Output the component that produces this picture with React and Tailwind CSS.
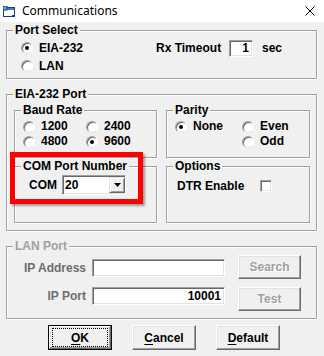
import React from "react";

const sunken =
  "bg-white border border-t-[#a0a0a0] border-l-[#a0a0a0] border-r-white border-b-white shadow-[inset_1px_1px_0_#696969,inset_-1px_-1px_0_#e3e3e3]";

function Group({ label, className = "", children, disabled }) {
  return (
    <div
      className={`relative border border-[#a0a0a0] shadow-[1px_1px_0_#fff,inset_1px_1px_0_#fff] ${className}`}
    >
      <span
        className={`absolute left-[6px] -top-[8px] px-[2px] bg-[#f0f0f0] leading-[14px] whitespace-nowrap ${
          disabled ? "text-[#a0a0a0]" : "text-black"
        }`}
      >
        {label}
      </span>
      {children}
    </div>
  );
}

function Radio({ checked, label, className = "" }) {
  return (
    <div className={`flex items-center h-[15px] ${className}`}>
      <span className="relative w-[12px] h-[12px] rounded-full border border-t-[#a0a0a0] border-l-[#a0a0a0] border-r-white border-b-[#e3e3e3] bg-white shadow-[inset_1px_1px_0_#696969] flex items-center justify-center shrink-0">
        {checked && <span className="w-[4px] h-[4px] rounded-full bg-black" />}
      </span>
      <span className="ml-[6px] leading-[15px] whitespace-nowrap">{label}</span>
    </div>
  );
}

function Btn({ children, disabled, isDefault, className = "" }) {
  const inner = (
    <div className="h-full w-full flex items-center justify-center border border-t-white border-l-white border-r-[#696969] border-b-[#696969] shadow-[inset_-1px_-1px_0_#a0a0a0,inset_1px_1px_0_#e3e3e3] bg-[#f0f0f0]">
      <span
        className={
          disabled ? "text-[#a0a0a0] [text-shadow:1px_1px_0_#fff]" : "text-black"
        }
      >
        {children}
      </span>
    </div>
  );
  if (isDefault) {
    return (
      <div className={`border border-black ${className}`}>
        <div className="relative h-full w-full">
          {inner}
          <div className="absolute left-[3px] top-[2px] right-[3px] bottom-[2px] border border-dotted border-black" />
        </div>
      </div>
    );
  }
  return <div className={className}>{inner}</div>;
}

export default function App() {
  return (
    <div className="relative w-[324px] h-[356px] overflow-hidden bg-[#f0f0f0] font-['Liberation_Sans',Arial,sans-serif] text-[12px] font-bold text-black">
      {/* Title bar */}
      <div className="h-[22px] bg-white flex items-center font-normal font-['Noto_Sans',sans-serif]">
        <svg width="13" height="12" viewBox="0 0 13 12" className="ml-[3px] mt-[1px]">
          <rect x="0.5" y="1.5" width="11" height="9" fill="#ffffff" stroke="#1b3f7a" />
          <rect x="1" y="2" width="10" height="2" fill="#3a7bd5" />
          <rect x="0" y="0" width="4" height="4" fill="#4fb0e8" stroke="#1b3f7a" strokeWidth="1" />
          <rect x="9" y="9" width="2" height="2" fill="#1b3f7a" />
        </svg>
        <span className="ml-[6px] text-[12px] leading-[14px]">Communications</span>
        <svg width="10" height="10" viewBox="0 0 10 10" className="ml-auto mr-[9px]">
          <path d="M0.5 0.5 L9.5 9.5 M9.5 0.5 L0.5 9.5" stroke="#000" strokeWidth="1" />
        </svg>
      </div>

      <div className="px-[6px] flex flex-col">
        {/* Port Select */}
        <Group label="Port Select" className="mt-[8px] w-[311px] h-[49px]">
          <div className="flex pt-[8px]">
            <div className="w-[149px] pl-[14px] flex flex-col">
              <div className="h-[18px] flex items-center">
                <Radio checked label="EIA-232" />
              </div>
              <div className="h-[18px] flex items-center">
                <Radio label="LAN" />
              </div>
            </div>
            <div className="h-[18px] flex items-center">
              <span className="w-[73px] whitespace-nowrap">Rx Timeout</span>
              <div className={`w-[24px] h-[17px] ${sunken} flex items-center justify-end pr-[3px]`}>
                1
              </div>
              <span className="ml-[9px]">sec</span>
            </div>
          </div>
        </Group>

        {/* EIA-232 Port */}
        <Group label="EIA-232 Port" className="mt-[15px] w-[311px] h-[137px]">
          <div className="flex mt-[15px] ml-[7px] gap-[9px]">
            <Group label="Baud Rate" className="w-[143px] h-[48px]">
              <div className="pt-[8px] pl-[8px] grid grid-cols-[63px_63px]">
                <Radio label="1200" />
                <Radio label="2400" />
                <Radio label="4800" />
                <Radio checked label="9600" />
              </div>
            </Group>
            <Group label="Parity" className="w-[144px] h-[48px]">
              <div className="pt-[8px] pl-[8px] grid grid-cols-[67px_67px]">
                <Radio checked label="None" />
                <Radio label="Even" />
                <span />
                <Radio label="Odd" />
              </div>
            </Group>
          </div>
          <div className="flex mt-[8px] ml-[7px] gap-[9px]">
            <Group label="COM Port Number" className="w-[143px] h-[57px]">
              <div className="pt-[8px] pl-[14px] flex items-center">
                <span className="w-[33px]">COM</span>
                <div className={`w-[64px] h-[20px] ${sunken} flex items-center`}>
                  <span className="ml-[2px] flex-1">20</span>
                  <div className="w-[16px] h-[16px] mr-[0px] flex items-center justify-center border border-t-[#e3e3e3] border-l-[#e3e3e3] border-r-[#696969] border-b-[#696969] shadow-[inset_1px_1px_0_#fff,inset_-1px_-1px_0_#a0a0a0] bg-[#f0f0f0]">
                    <svg width="7" height="4" viewBox="0 0 7 4">
                      <path d="M0 0 H7 L3.5 4 Z" fill="#000" />
                    </svg>
                  </div>
                </div>
              </div>
            </Group>
            <Group label="Options" className="w-[144px] h-[57px]">
              <div className="pt-[10px] pl-[10px] h-[28px] flex items-center">
                <span className="leading-[18px]">DTR Enable</span>
                <span className={`ml-[16px] w-[12px] h-[12px] ${sunken}`} />
              </div>
            </Group>
          </div>
        </Group>

        {/* LAN Port */}
        <Group label="LAN Port" disabled className="mt-[15px] w-[311px] h-[73px]">
          <div className="pt-[8px] flex flex-col">
            <div className="flex items-start h-[24px]">
              <div className="w-[79px] mt-[4px] h-[18px] flex items-center justify-end text-[#6d6d6d]">
                IP Address
              </div>
              <div className={`ml-[6px] mt-[4px] w-[133px] h-[18px] ${sunken}`} />
              <Btn disabled className="ml-[13px] w-[63px] h-[24px]">
                Search
              </Btn>
            </div>
            <div className="flex items-start h-[24px] mt-[8px]">
              <div className="w-[79px] h-[18px] flex items-center justify-end text-[#6d6d6d]">
                IP Port
              </div>
              <div className={`ml-[6px] w-[133px] h-[18px] ${sunken} flex items-center justify-end pr-[3px]`}>
                10001
              </div>
              <Btn disabled className="ml-[13px] w-[63px] h-[24px]">
                Test
              </Btn>
            </div>
          </div>
        </Group>

        {/* Buttons */}
        <div className="flex mt-[6px] ml-[42px] gap-[20px]">
          <Btn isDefault className="w-[64px] h-[25px]">
            <span className="underline underline-offset-[2px]">O</span>K
          </Btn>
          <Btn className="w-[64px] h-[25px]">
            <span className="underline underline-offset-[2px]">C</span>ancel
          </Btn>
          <Btn className="w-[64px] h-[25px]">
            <span className="underline underline-offset-[2px]">D</span>efault
          </Btn>
        </div>
      </div>

      {/* Red annotation */}
      <div className="absolute left-[10px] top-[152px] w-[133px] h-[52px] border-[5px] border-[#ff0000] shadow-[2px_2px_2px_rgba(0,0,0,0.35)]" />
    </div>
  );
}
